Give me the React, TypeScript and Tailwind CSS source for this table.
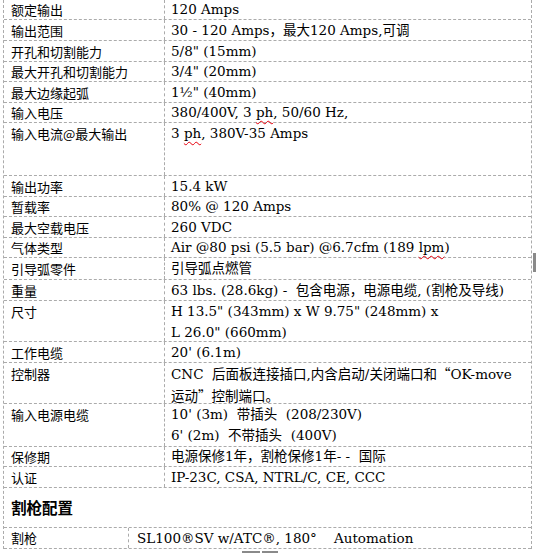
import type { ReactNode } from "react";

type Row = { label: string; h: string; multi?: boolean; value: ReactNode };

const Sq = ({ children }: { children: ReactNode }) => (
  <span className="underline decoration-wavy decoration-red-600 decoration-1 underline-offset-[3px]">{children}</span>
);

// full-width punctuation from the CJK face
const Cj = ({ children }: { children: ReactNode }) => (
  <span style={{ fontFamily: '"Noto Sans CJK SC", sans-serif' }}>{children}</span>
);

const rows: Row[] = [
  { label: "额定输出", h: "h-[20px]", value: "120 Amps" },
  {
    label: "输出范围",
    h: "h-[21px]",
    value: (
      <>
        30 - 120 Amps<Cj>，</Cj>最大120 Amps,可调
      </>
    ),
  },
  { label: "开孔和切割能力", h: "h-[21px]", value: '5/8" (15mm)' },
  { label: "最大开孔和切割能力", h: "h-[20px]", value: '3/4" (20mm)' },
  { label: "最大边缘起弧", h: "h-[21px]", value: '1½" (40mm)' },
  {
    label: "输入电压",
    h: "h-[20px]",
    value: (
      <>
        380/400V, 3 <Sq>ph</Sq>, 50/60 Hz,
      </>
    ),
  },
  {
    label: "输入电流@最大输出",
    h: "h-[53px]",
    multi: true,
    value: (
      <>
        3 <Sq>ph</Sq>, 380V-35 Amps
      </>
    ),
  },
  { label: "输出功率", h: "h-[21px]", value: "15.4 kW" },
  { label: "暂载率", h: "h-[20px]", value: "80% @ 120 Amps" },
  { label: "最大空载电压", h: "h-[21px]", value: "260 VDC" },
  {
    label: "气体类型",
    h: "h-[20px]",
    value: (
      <>
        Air @80 psi (5.5 bar) @6.7cfm (189 <Sq>lpm</Sq>)
      </>
    ),
  },
  { label: "引导弧零件", h: "h-[22px]", value: "引导弧点燃管" },
  { label: "重量", h: "h-[21px]", value: "63 lbs. (28.6kg) -  包含电源，电源电缆, (割枪及导线)" },
  {
    label: "尺寸",
    h: "h-[41px]",
    multi: true,
    value: (
      <>
        H 13.5" (343mm) x W 9.75" (248mm) x
        <br />
        L 26.0" (660mm)
      </>
    ),
  },
  { label: "工作电缆", h: "h-[21px]", value: "20' (6.1m)" },
  {
    label: "控制器",
    h: "h-[41px]",
    multi: true,
    value: (
      <>
        CNC  后面板连接插口,内含启动/关闭端口和<Cj>“</Cj>OK-move
        <br />
        运动<Cj>”</Cj>控制端口。
      </>
    ),
  },
  {
    label: "输入电源电缆",
    h: "h-[43px]",
    multi: true,
    value: (
      <>
        10' (3m)  带插头  (208/230V)
        <br />
        6' (2m)  不带插头  (400V)
      </>
    ),
  },
  { label: "保修期", h: "h-[20px]", value: "电源保修1年，割枪保修1年- -  国际" },
  { label: "认证", h: "h-[21px]", value: "IP-23C, CSA, NTRL/C, CE, CCC" },
];

export default function App() {
  return (
    <div
      className="relative h-[553px] w-[536px] overflow-hidden bg-white text-[13px] text-black"
      style={{ fontFamily: '"DejaVu Serif", "Noto Sans CJK SC", serif' }}
    >
      {/* spec table */}
      <div className="ml-[3px] w-[529px] border-x border-dashed border-[#ababab]">
        {rows.map((r) => (
          <div
            key={r.label}
            className={`flex border-b border-dashed border-[#ababab] ${r.h} ${r.multi ? "items-start" : "items-center"}`}
          >
            <div
              className="w-[161px] shrink-0 self-stretch border-r border-dashed border-[#ababab] pl-[7px] leading-[21px]"
              style={{ fontFamily: '"Noto Sans CJK SC", sans-serif' }}
            >
              <div className={r.multi ? "" : "flex h-full items-center"}>{r.label}</div>
            </div>
            <div className="whitespace-pre pl-[6px] text-[13.5px] leading-[21px]">{r.value}</div>
          </div>
        ))}

        {/* heading */}
        <div className="flex h-[40px] items-center border-b border-dashed border-[#ababab] pl-[7px]">
          <span
            className="text-[15.5px] font-bold"
            style={{ fontFamily: '"Noto Sans CJK SC", sans-serif' }}
          >
            割枪配置
          </span>
        </div>

        <div className="flex h-[21px] items-center border-b border-dashed border-[#ababab]">
          <div
            className="flex w-[125px] shrink-0 items-center self-stretch border-r border-dashed border-[#ababab] pl-[7px]"
            style={{ fontFamily: '"Noto Sans CJK SC", sans-serif' }}
          >
            割枪
          </div>
          <div className="whitespace-pre pl-[8px] text-[13.5px] leading-[21px]">SL100®SV w/ATC®, 180°    Automation</div>
        </div>
      </div>

      {/* scroll marks */}
      <div className="absolute left-[533px] top-[253px] h-[19px] w-[3px] bg-[#8a8a8a]" />
      <div className="absolute bottom-0 left-[242px] h-[2px] w-[18px] bg-[#8a8a8a]" />
      <div className="absolute bottom-0 left-[262px] h-[2px] w-[16px] bg-[#8a8a8a]" />
    </div>
  );
}
